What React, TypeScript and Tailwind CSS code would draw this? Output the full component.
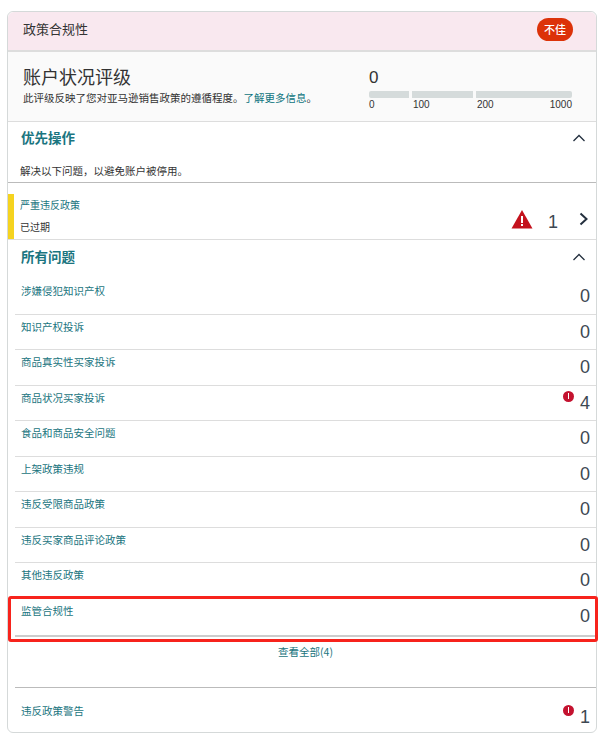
const font = { fontFamily: '"Noto Sans CJK SC", "Liberation Sans", sans-serif' };

const issues = [
  { label: "涉嫌侵犯知识产权", count: 0 },
  { label: "知识产权投诉", count: 0 },
  { label: "商品真实性买家投诉", count: 0 },
  { label: "商品状况买家投诉", count: 4, alert: true },
  { label: "食品和商品安全问题", count: 0 },
  { label: "上架政策违规", count: 0 },
  { label: "违反受限商品政策", count: 0 },
  { label: "违反买家商品评论政策", count: 0 },
  { label: "其他违反政策", count: 0 },
];

const Chevron = ({ up }: { up?: boolean }) => (
  <svg width="14" height="14" viewBox="0 0 14 14" fill="none" stroke="#232f3e" strokeWidth="1.3">
    {up ? <path d="M1.5 10 L7 4.5 L12.5 10" /> : <path d="M4.5 1.5 L10.5 7 L4.5 12.5" strokeWidth="2" />}
  </svg>
);

const AlertDot = () => (
  <span className="flex h-[11px] w-[11px] items-center justify-center rounded-full bg-[#c4122f]">
    <span className="h-[6px] w-[1.5px] bg-white" />
  </span>
);

const IssueRow = ({ label, count, alert }: { label: string; count: number; alert?: boolean }) => (
  <div className="flex h-[35.5px] border-b border-[#ddd] pl-[6px] pr-[6px]">
    <span className="mt-[4px] flex-1 text-[10.5px] leading-[16px] text-[#1a7580]">{label}</span>
    {alert && (
      <span className="mr-[6px] mt-[5px]">
        <AlertDot />
      </span>
    )}
    <span className="mt-[6px] font-['Liberation_Sans'] text-[18px] leading-[22px] text-[#3d4852]">{count}</span>
  </div>
);

export default function App() {
  return (
    <div className="h-[738px] w-[604px] bg-white pl-[7px] pt-[11px]" style={font}>
      <div className="relative h-[722px] w-[590px] rounded-[6px] border border-[#d5d9d9]">
        <div className="flex h-[40px] items-center justify-between rounded-t-[6px] border-b-2 border-[#dddddd] bg-[#f9e8ef] pb-[4px] pl-[15px] pr-[23px]">
          <span className="text-[13px] text-[#333]">政策合规性</span>
          <span className="flex h-[23px] w-[36px] items-center justify-center rounded-full bg-[#dc3209] text-[11px] font-medium text-white">
            不佳
          </span>
        </div>

        <div className="flex h-[70px] border-b border-[#ddd] bg-[#fafafa] pl-[15px]">
          <div className="w-[346px] pt-[11px]">
            <div className="text-[18px] leading-[26px] text-[#333]">账户状况评级</div>
            <div className="mt-[1px] text-[10.5px] leading-[16px] text-[#333]">
              此评级反映了您对亚马逊销售政策的遵循程度。<span className="text-[#0f7580]">了解更多信息</span>。
            </div>
          </div>
          <div className="w-[203px] pt-[16px] font-['Liberation_Sans']">
            <div className="text-[17px] leading-[20px] text-[#333]">0</div>
            <div className="mt-[3px] flex gap-[3px]">
              <span className="h-[7px] w-[40px] rounded-l-[2px] bg-[#d5dbdb]" />
              <span className="h-[7px] w-[61px] bg-[#d5dbdb]" />
              <span className="h-[7px] w-[96px] rounded-r-[2px] bg-[#d5dbdb]" />
            </div>
            <div className="flex text-[10px] leading-[14px] text-[#333]">
              <span className="w-[43px]">0</span>
              <span className="w-[64px] pl-[1px]">100</span>
              <span className="flex-1 pl-[1px]">200</span>
              <span>1000</span>
            </div>
          </div>
        </div>

        <div className="flex h-[31px] items-center justify-between pl-[13px] pr-[10px]">
          <span className="text-[13.5px] font-bold text-[#1a7580]">优先操作</span>
          <Chevron up />
        </div>
        <div className="h-[30px] border-b border-[#bbb] pl-[12px] pt-[10px] text-[10.5px] leading-[16px] text-[#333]">
          解决以下问题，以避免账户被停用。
        </div>

        <div className="flex h-[57px] items-end border-b border-[#ddd]">
          <div className="h-[45px] w-[6px] bg-[#f5d31f]" />
          <div className="flex h-[45px] flex-1 flex-col pl-[6px]">
            <span className="text-[10px] leading-[22px] text-[#1a7580]">严重违反政策</span>
            <span className="text-[10px] leading-[22px] text-[#333]">已过期</span>
          </div>
          <div className="mb-[8px] flex h-[26px] items-start pr-[6px]">
            <svg className="mt-[4px]" width="22" height="20" viewBox="0 0 22 20">
              <path d="M11 1 L21.5 19.5 L0.5 19.5 Z" fill="#c4121d" />
              <rect x="10" y="7" width="2" height="7" fill="#fff" />
              <rect x="10" y="15" width="2" height="2" fill="#fff" />
            </svg>
            <span className="ml-[15px] mt-[7px] w-[28px] font-['Liberation_Sans'] text-[18px] leading-[20px] text-[#3d4852]">1</span>
            <span className="mt-[7px]">
              <Chevron />
            </span>
          </div>
        </div>

        <div className="flex h-[39px] items-center justify-between pb-[6px] pl-[13px] pr-[10px]">
          <span className="text-[13.5px] font-bold text-[#1a7580]">所有问题</span>
          <Chevron up />
        </div>

        <div className="ml-[7px]">
          {issues.map((item) => (
            <IssueRow key={item.label} {...item} />
          ))}
          <div className="relative flex h-[38px] border-b-2 border-[#ccc] pl-[6px] pr-[6px]">
            <span className="mt-[4px] flex-1 text-[10.5px] leading-[16px] text-[#1a7580]">监管合规性</span>
            <span className="mt-[6px] font-['Liberation_Sans'] text-[18px] leading-[22px] text-[#3d4852]">0</span>
            <div className="absolute -bottom-[7px] -left-[7px] -right-[2px] -top-[3px] rounded-[3px] border-[3px] border-[#f7231c]" />
          </div>
        </div>

        <div className="ml-[7px] h-[51px] border-b border-[#bbb] pt-[7px] text-center text-[10.5px] leading-[16px] text-[#1a7580]">
          查看全部(4)
        </div>

        <div className="flex pl-[13px] pr-[6px] pt-[14px]">
          <span className="mt-[1px] flex-1 text-[10.5px] leading-[16px] text-[#1a7580]">违反政策警告</span>
          <span className="mr-[6px] mt-[3px]">
            <AlertDot />
          </span>
          <span className="mt-[4px] font-['Liberation_Sans'] text-[18px] leading-[22px] text-[#3d4852]">1</span>
        </div>
      </div>
    </div>
  );
}
